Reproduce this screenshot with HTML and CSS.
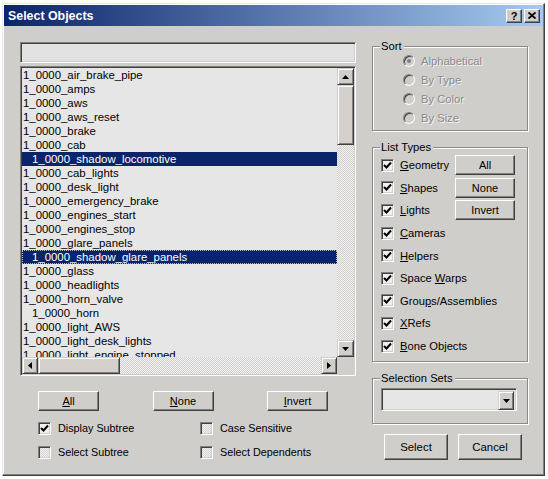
FILE: index.html
```
<!DOCTYPE html>
<html lang="en">
<head>
  <meta charset="UTF-8">
  <title>Select Objects</title>
  <link rel="stylesheet" href="styles.css">
</head>
<body>
  <div class="dialog">
    <div class="titlebar">
      <span class="title">Select Objects</span>
      <div class="caption-btns">
        <span class="cbtn">?</span>
        <span class="cbtn">
          <svg width="8" height="7" viewBox="0 0 8 7"><path d="M0.5 0.5 L7.5 6.5 M7.5 0.5 L0.5 6.5" stroke="#000" stroke-width="1.8"/></svg>
        </span>
      </div>
    </div>

    <div class="content">
      <div class="left">
        <div class="filter"></div>

        <div class="listbox">
          <div class="list-top">
            <div class="rows">
              <div class="row">1_0000_air_brake_pipe</div>
              <div class="row">1_0000_amps</div>
              <div class="row">1_0000_aws</div>
              <div class="row">1_0000_aws_reset</div>
              <div class="row">1_0000_brake</div>
              <div class="row">1_0000_cab</div>
              <div class="row child sel">1_0000_shadow_locomotive</div>
              <div class="row">1_0000_cab_lights</div>
              <div class="row">1_0000_desk_light</div>
              <div class="row">1_0000_emergency_brake</div>
              <div class="row">1_0000_engines_start</div>
              <div class="row">1_0000_engines_stop</div>
              <div class="row">1_0000_glare_panels</div>
              <div class="row child sel focus">1_0000_shadow_glare_panels</div>
              <div class="row">1_0000_glass</div>
              <div class="row">1_0000_headlights</div>
              <div class="row">1_0000_horn_valve</div>
              <div class="row child">1_0000_horn</div>
              <div class="row">1_0000_light_AWS</div>
              <div class="row">1_0000_light_desk_lights</div>
              <div class="row">1_0000_light_engine_stopped</div>
            </div>
            <div class="vscroll">
              <span class="sbtn"><svg width="7" height="4" viewBox="0 0 7 4"><path d="M3.5 0 L7 4 L0 4 Z"/></svg></span>
              <span class="vthumb"></span>
              <span class="track"></span>
              <span class="sbtn"><svg width="7" height="4" viewBox="0 0 7 4"><path d="M0 0 L7 0 L3.5 4 Z"/></svg></span>
            </div>
          </div>
          <div class="hscroll-row">
            <div class="hscroll">
              <span class="sbtn"><svg width="4" height="7" viewBox="0 0 4 7"><path d="M4 0 L4 7 L0 3.5 Z"/></svg></span>
              <span class="hthumb"></span>
              <span class="track"></span>
              <span class="sbtn"><svg width="4" height="7" viewBox="0 0 4 7"><path d="M0 0 L4 3.5 L0 7 Z"/></svg></span>
            </div>
            <div class="corner"></div>
          </div>
        </div>

        <div class="btn-row">
          <span class="btn"><u>A</u>ll</span>
          <span class="btn"><u>N</u>one</span>
          <span class="btn"><u>I</u>nvert</span>
        </div>

        <div class="opts">
          <label class="opt"><span class="chk on"><svg width="9" height="9" viewBox="0 0 9 9"><path d="M1 4 L3.5 6.5 L8 1.5" stroke="#000" stroke-width="2" fill="none"/></svg></span>Display Subtree</label>
          <label class="opt"><span class="chk dim"></span>Case Sensitive</label>
          <label class="opt"><span class="chk dim"></span>Select Subtree</label>
          <label class="opt"><span class="chk dim"></span>Select Dependents</label>
        </div>
      </div>

      <div class="right">
        <fieldset class="group sort">
          <legend>Sort</legend>
          <div class="radios">
            <div class="radio-row"><span class="radio checked"></span>Alphabetical</div>
            <div class="radio-row"><span class="radio"></span>By Type</div>
            <div class="radio-row"><span class="radio"></span>By Color</div>
            <div class="radio-row"><span class="radio"></span>By Size</div>
          </div>
        </fieldset>

        <fieldset class="group types">
          <legend>List Types</legend>
          <div class="types-list">
            <div class="type-row"><span class="chk on"><svg width="9" height="9" viewBox="0 0 9 9"><path d="M1 4 L3.5 6.5 L8 1.5" stroke="#000" stroke-width="2" fill="none"/></svg></span><span><u>G</u>eometry</span><span class="btn small">All</span></div>
            <div class="type-row"><span class="chk on"><svg width="9" height="9" viewBox="0 0 9 9"><path d="M1 4 L3.5 6.5 L8 1.5" stroke="#000" stroke-width="2" fill="none"/></svg></span><span><u>S</u>hapes</span><span class="btn small">None</span></div>
            <div class="type-row"><span class="chk on"><svg width="9" height="9" viewBox="0 0 9 9"><path d="M1 4 L3.5 6.5 L8 1.5" stroke="#000" stroke-width="2" fill="none"/></svg></span><span><u>L</u>ights</span><span class="btn small">Invert</span></div>
            <div class="type-row"><span class="chk on"><svg width="9" height="9" viewBox="0 0 9 9"><path d="M1 4 L3.5 6.5 L8 1.5" stroke="#000" stroke-width="2" fill="none"/></svg></span><span><u>C</u>ameras</span></div>
            <div class="type-row"><span class="chk on"><svg width="9" height="9" viewBox="0 0 9 9"><path d="M1 4 L3.5 6.5 L8 1.5" stroke="#000" stroke-width="2" fill="none"/></svg></span><span><u>H</u>elpers</span></div>
            <div class="type-row"><span class="chk on"><svg width="9" height="9" viewBox="0 0 9 9"><path d="M1 4 L3.5 6.5 L8 1.5" stroke="#000" stroke-width="2" fill="none"/></svg></span><span>Space <u>W</u>arps</span></div>
            <div class="type-row"><span class="chk on"><svg width="9" height="9" viewBox="0 0 9 9"><path d="M1 4 L3.5 6.5 L8 1.5" stroke="#000" stroke-width="2" fill="none"/></svg></span><span>Grou<u>p</u>s/Assemblies</span></div>
            <div class="type-row"><span class="chk on"><svg width="9" height="9" viewBox="0 0 9 9"><path d="M1 4 L3.5 6.5 L8 1.5" stroke="#000" stroke-width="2" fill="none"/></svg></span><span><u>X</u>Refs</span></div>
            <div class="type-row"><span class="chk on"><svg width="9" height="9" viewBox="0 0 9 9"><path d="M1 4 L3.5 6.5 L8 1.5" stroke="#000" stroke-width="2" fill="none"/></svg></span><span><u>B</u>one Objects</span></div>
          </div>
        </fieldset>

        <fieldset class="group sets">
          <legend>Selection Sets</legend>
          <div class="combo">
            <span class="sbtn combo-btn"><svg width="7" height="4" viewBox="0 0 7 4"><path d="M0 0 L7 0 L3.5 4 Z"/></svg></span>
          </div>
        </fieldset>

        <div class="actions">
          <span class="btn big">Select</span>
          <span class="btn big">Cancel</span>
        </div>
      </div>
    </div>
  </div>
</body>
</html>
```
FILE: styles.css
```
body {
  margin: 0;
  background: #fff;
  font-family: "Liberation Sans", Arial, sans-serif;
  font-size: 11px;
  color: #000;
}
.dialog {
  margin: 3px 0 0 2px;
  width: 543px;
  height: 473px;
  box-sizing: border-box;
  padding: 1px;
  background: #cfcecb;
  border: 1px solid;
  border-color: #e8e8e8 #404040 #404040 #e8e8e8;
  box-shadow: inset -1px -1px 0 #808080, inset 1px 1px 0 #fff;
}
.titlebar {
  height: 21px;
  display: flex;
  align-items: center;
  justify-content: space-between;
  padding: 0 3px 0 4px;
  background: linear-gradient(to right, #0a246a, #a6caf0);
}
.title {
  color: #fff;
  font-weight: bold;
  font-size: 12.4px;
  padding-top: 1px;
}
.caption-btns {
  display: flex;
  gap: 2px;
}
.cbtn {
  width: 16px;
  height: 14px;
  box-sizing: border-box;
  display: flex;
  align-items: center;
  justify-content: center;
  background: #cfcecb;
  border: 1px solid;
  border-color: #fff #404040 #404040 #fff;
  box-shadow: inset -1px -1px 0 #808080;
  font-weight: bold;
  font-size: 11px;
  line-height: 12px;
}

.content {
  display: flex;
  gap: 16px;
  padding: 16px 0 0 16px;
}
.left {
  width: 336px;
}

/* sunken fields */
.filter, .listbox, .combo {
  box-sizing: border-box;
  border: 1px solid;
  border-color: #808080 #fff #fff #808080;
  box-shadow: inset 1px 1px 0 #404040, inset -1px -1px 0 #cfcecb;
  background: #e6e6e6;
}
.filter {
  height: 21px;
  background: #e2e2e2;
}
.listbox {
  margin-top: 3px;
  height: 310px;
  padding: 1px;
  display: flex;
  flex-direction: column;
}
.list-top {
  flex: 1;
  display: flex;
  min-height: 0;
}
.rows {
  flex: 1;
  overflow: hidden;
  font-size: 11.4px;
}
.row {
  height: 14px;
  line-height: 14px;
  padding-left: 1px;
  white-space: nowrap;
}
.row.child {
  padding-left: 10px;
}
.row.sel {
  background: #0a246a;
  color: #fff;
}
.row.focus {
  outline: 1px dotted #b8b8b8;
  outline-offset: -1px;
}

/* scrollbars */
.sbtn {
  width: 17px;
  height: 17px;
  box-sizing: border-box;
  display: flex;
  align-items: center;
  justify-content: center;
  background: #cfcecb;
  border: 1px solid;
  border-color: #cfcecb #404040 #404040 #cfcecb;
  box-shadow: inset 1px 1px 0 #fff, inset -1px -1px 0 #808080;
  flex: none;
}
.sbtn svg {
  fill: #000;
}
.track {
  flex: 1;
  background: repeating-conic-gradient(#f4f4f4 0 25%, #cfcecb 0 50%) 0 0 / 2px 2px;
}
.vscroll {
  width: 17px;
  display: flex;
  flex-direction: column;
}
.vthumb, .hthumb {
  box-sizing: border-box;
  background: #d6d0cc;
  border: 1px solid;
  border-color: #cfcecb #404040 #404040 #cfcecb;
  box-shadow: inset 1px 1px 0 #fff, inset -1px -1px 0 #808080;
  flex: none;
}
.vthumb {
  height: 60px;
}
.hscroll-row {
  height: 17px;
  display: flex;
}
.hscroll {
  flex: 1;
  display: flex;
}
.hscroll .sbtn {
  width: 16px;
}
.hthumb {
  width: 82px;
}
.corner {
  width: 17px;
  background: #cfcecb;
}

/* buttons */
.btn {
  box-sizing: border-box;
  display: flex;
  align-items: center;
  justify-content: center;
  background: #cfcecb;
  border: 1px solid;
  border-color: #fff #404040 #404040 #fff;
  box-shadow: inset -1px -1px 0 #808080;
  font-size: 11px;
}
.btn-row {
  margin-top: 15px;
  padding: 0 28px 0 18px;
  display: flex;
  justify-content: space-between;
}
.btn-row .btn {
  width: 61px;
  height: 20px;
}

/* checkboxes */
.chk {
  width: 13px;
  height: 13px;
  box-sizing: border-box;
  flex: none;
  display: flex;
  align-items: center;
  justify-content: center;
  border: 1px solid;
  border-color: #808080 #fff #fff #808080;
  box-shadow: inset 1px 1px 0 #404040, inset -1px -1px 0 #cfcecb;
  background: #f0f0f0;
}
.chk.dim {
  background: repeating-conic-gradient(#f0f0f0 0 25%, #d6d6d6 0 50%) 0 0 / 2px 2px;
}
.opts {
  margin-top: 5px;
  padding-left: 18px;
  display: grid;
  grid-template-columns: 162px auto;
  grid-auto-rows: 24px;
  font-size: 10.8px;
}
.opt {
  display: flex;
  align-items: center;
  gap: 7px;
}

/* right side */
.right {
  width: 156px;
  margin-top: -2px;
}
.group {
  margin: 0;
  padding: 0;
  border: 1px solid #8a8a8a;
  box-shadow: inset 1px 1px 0 #fff, 1px 1px 0 #fff;
  min-width: 0;
}
.group legend {
  margin-left: 7px;
  padding: 0 2px 0 1px;
  background: #cfcecb;
  line-height: 13px;
  font-size: 11.2px;
}
.group + .group {
  margin-top: 10px;
}
.radios {
  margin-top: -2px;
  padding: 0 0 3px 30px;
  color: #8a8a8a;
  text-shadow: 1px 1px 0 #f4f4f4;
  font-size: 11.2px;
}
.radio-row {
  height: 19px;
  display: flex;
  align-items: center;
  gap: 6px;
}
.radio {
  width: 12px;
  height: 12px;
  box-sizing: border-box;
  border-radius: 50%;
  border: 1px solid;
  border-color: #808080 #fff #fff #808080;
  box-shadow: inset 1px 1px 0 #404040;
  background: #cfcecb;
  display: flex;
  align-items: center;
  justify-content: center;
}
.radio.checked::after {
  content: "";
  width: 4px;
  height: 4px;
  border-radius: 50%;
  background: #808080;
}
.types-list {
  padding: 0 12px 4px 8px;
  font-size: 11.2px;
}
.type-row {
  height: 22.6px;
  display: flex;
  align-items: center;
  white-space: nowrap;
}
.type-row .chk {
  margin-right: 6px;
}
.btn.small {
  margin-left: auto;
  width: 60px;
  height: 20px;
}
.combo {
  margin: 3px 0 12px 8px;
  width: 136px;
  height: 23px;
  padding: 2px;
  display: flex;
  justify-content: flex-end;
}
.combo-btn {
  width: 16px;
  height: 19px;
}
.actions {
  margin-top: 10px;
  padding-left: 12px;
  display: flex;
  gap: 10px;
}
.btn.big {
  width: 64px;
  height: 26px;
  font-size: 11.4px;
}
```
